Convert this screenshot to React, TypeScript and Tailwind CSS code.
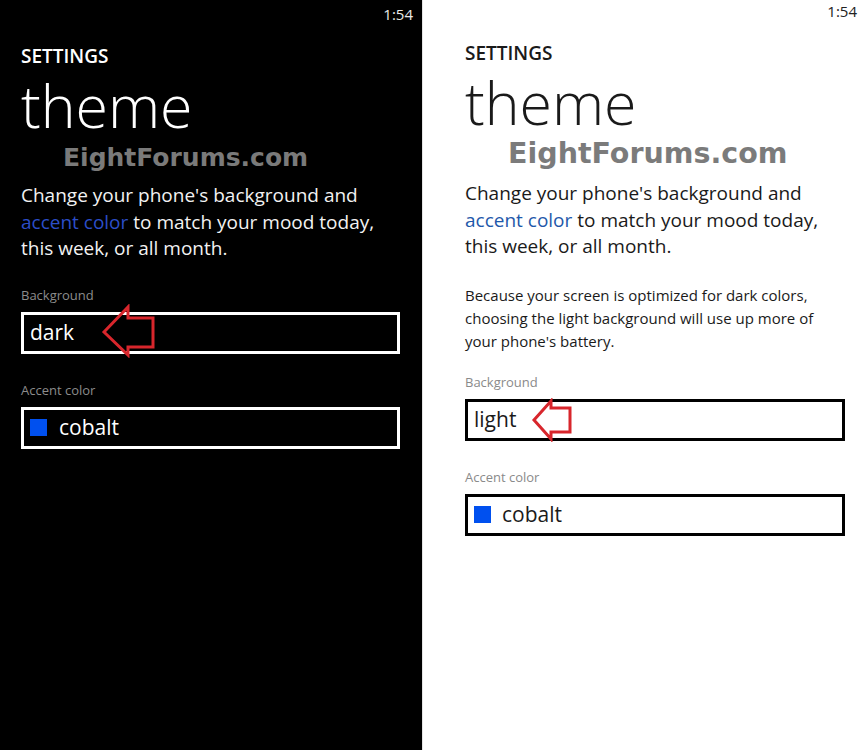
import React from "react";

const font = { fontFamily: '"Open Sans", "Noto Sans", sans-serif' };

function ArrowLeft({ w, h, d }: { w: number; h: number; d: string }) {
  return (
    <svg width={w} height={h} viewBox={`0 0 ${w} ${h}`} className="block">
      <path d={d} fill="none" stroke="#d8262c" strokeWidth="3" strokeLinejoin="miter" />
    </svg>
  );
}

export default function App() {
  return (
    <div className="flex w-[866px] h-[750px] overflow-hidden" style={font}>
      {/* dark theme */}
      <div className="w-[422px] h-full bg-black text-white pl-[21px] pr-[22px] flex flex-col">
        <div className="h-[28px] flex items-center justify-end -mr-[13px] text-[15px] text-[#e8e8e8]">1:54</div>
        <div className="mt-[16px] text-[19px] leading-[25px] font-semibold">SETTINGS</div>
        <div className="mt-[4px] text-[59px] leading-[64px] font-light">theme</div>
        <div
          className="mt-[6px] ml-[42px] text-[25px] leading-[29px] font-bold text-[#7a7a7a]"
          style={{ fontFamily: '"DejaVu Sans", sans-serif' }}
        >
          EightForums.com
        </div>
        <p className="mt-[10px] text-[19px] leading-[26.5px] text-[#f2f2f2]">
          Change your phone's background and <span className="text-[#2c4ec8]">accent color</span> to match your mood
          today, this week, or all month.
        </p>
        <div className="mt-[23px] text-[13px] leading-[20px] text-[#8c8c8c]">Background</div>
        <div className="relative mt-[7px] h-[42px] border-[3px] border-white flex items-center pl-[6px] text-[21px]">
          dark
          <div className="absolute left-[77px] top-[-11px]">
            <ArrowLeft w={56} h={54} d="M3 28 L27 3 L27 14 L52 14 L52 43 L27 43 L27 51 Z" />
          </div>
        </div>
        <div className="mt-[26px] text-[13px] leading-[20px] text-[#8c8c8c]">Accent color</div>
        <div className="mt-[7px] h-[42px] border-[3px] border-white flex items-center pl-[6px] text-[21px]">
          <span className="w-[17px] h-[17px] bg-[#0050ef] mr-[12px]" />
          cobalt
        </div>
      </div>

      {/* light theme */}
      <div className="flex-1 h-full bg-white text-[#1a1a1a] border-l border-[#e4e4e4] pl-[42px] pr-[21px] flex flex-col">
        <div className="h-[22px] flex items-center justify-end -mr-[12px] text-[15px] text-[#222]">1:54</div>
        <div className="mt-[19px] text-[19px] leading-[25px] font-semibold">SETTINGS</div>
        <div className="mt-[4px] text-[59px] leading-[64px] font-light">theme</div>
        <div
          className="mt-[3px] ml-[43px] text-[28.5px] leading-[33px] font-bold text-[#7b7b7b]"
          style={{ fontFamily: '"DejaVu Sans", sans-serif' }}
        >
          EightForums.com
        </div>
        <p className="mt-[10px] text-[19px] leading-[26.5px]">
          Change your phone's background and <span className="text-[#1e58aa]">accent color</span> to match your mood
          today, this week, or all month.
        </p>
        <p className="mt-[24px] text-[15px] leading-[23px] pr-[8px]">
          Because your screen is optimized for dark colors, choosing the light background will use up more of your
          phone's battery.
        </p>
        <div className="mt-[19px] text-[13px] leading-[20px] text-[#8a8a8a]">Background</div>
        <div className="relative mt-[7px] h-[42px] border-[3px] border-black flex items-center pl-[6px] text-[21px]">
          light
          <div className="absolute left-[63px] top-[-4px]">
            <ArrowLeft w={43} h={44} d="M3 22 L20 3 L20 10 L39 10 L39 34 L20 34 L20 41 Z" />
          </div>
        </div>
        <div className="mt-[26px] text-[13px] leading-[20px] text-[#8a8a8a]">Accent color</div>
        <div className="mt-[7px] h-[42px] border-[3px] border-black flex items-center pl-[6px] text-[21px]">
          <span className="w-[17px] h-[17px] bg-[#0050ef] mr-[11px]" />
          cobalt
        </div>
      </div>
    </div>
  );
}
